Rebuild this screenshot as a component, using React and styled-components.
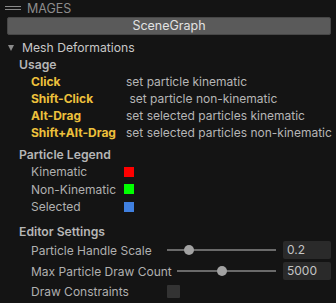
import React from "react";
import styled, { createGlobalStyle } from "styled-components";

const Global = createGlobalStyle`
    html, body {
        margin: 0;
        padding: 0;
        background: #141414;
    }
    body {
        font-family: Inter, "Noto Sans", sans-serif;
        font-size: 12px;
        -webkit-font-smoothing: antialiased;
    }
`

const usage = [
    ["Click", "set particle kinematic"],
    ["Shift-Click", " set particle non-kinematic"],
    ["Alt-Drag", "set selected particles kinematic"],
    ["Shift+Alt-Drag", "set selected particles non-kinematic"],
]

const legend = [
    ["Kinematic", "#ff0000"],
    ["Non-Kinematic", "#00ff00"],
    ["Selected", "#4080e0"],
]

export default function App() {
    return (
        <Panel>
            <Global />
            <Header>
                <Grip><span /><span /></Grip>
                <HeaderTitle>MAGES</HeaderTitle>
            </Header>
            <SceneButton>SceneGraph</SceneButton>
            <TreeNode>
                <Arrow />
                <span>Mesh Deformations</span>
            </TreeNode>
            <Body>
                <SectionTitle>Usage</SectionTitle>
                {usage.map(([k, d]) => (
                    <Row key={k}>
                        <Key>{k}</Key>
                        <Desc>{d}</Desc>
                    </Row>
                ))}

                <SectionTitle $gap={5}>Particle Legend</SectionTitle>
                {legend.map(([name, color]) => (
                    <LegendRow key={name}>
                        <LegendLabel>{name}</LegendLabel>
                        <Swatch $color={color} />
                    </LegendRow>
                ))}

                <SectionTitle $gap={7}>Editor Settings</SectionTitle>
                <SettingRow>
                    <SettingLabel>Particle Handle Scale</SettingLabel>
                    <Slider>
                        <Thumb style={{ left: "20%" }} />
                    </Slider>
                    <NumberBox>0.2</NumberBox>
                </SettingRow>
                <SettingRow>
                    <SettingLabel>Max Particle Draw Count</SettingLabel>
                    <Slider>
                        <Thumb style={{ left: "45.7%" }} />
                    </Slider>
                    <NumberBox>5000</NumberBox>
                </SettingRow>
                <SettingRow $h={19}>
                    <SettingLabel>Draw Constraints</SettingLabel>
                    <Checkbox />
                </SettingRow>
            </Body>
        </Panel>
    )
}

const Panel = styled.div`
    width: 336px;
    height: 303px;
    overflow: hidden;
    background: #141414;
    display: flex;
    flex-direction: column;
`

const Header = styled.div`
    height: 17px;
    display: flex;
    align-items: center;
    padding-left: 5px;
`

const Grip = styled.div`
    width: 16px;
    display: flex;
    flex-direction: column;
    gap: 2px;
    margin-right: 6px;
    margin-top: -1px;

    span {
        height: 1px;
        background: #8a8a8a;
    }
`

const HeaderTitle = styled.div`
    line-height: 17px;
    color: #8c8c8c;
    font-size: 12.5px;
`

const SceneButton = styled.div`
    margin-left: 7px;
    width: 322px;
    height: 16px;
    background: #5a5a5a;
    border: 1px solid #474747;
    border-radius: 2px;
    color: #e2e2e2;
    font-size: 12.5px;
    line-height: 16px;
    text-align: center;
`

const TreeNode = styled.div`
    margin-top: 4px;
    height: 17px;
    display: flex;
    align-items: center;
    padding-left: 8px;
    color: #c8c8c8;
    font-size: 12.2px;
`

const Arrow = styled.div`
    width: 0;
    height: 0;
    border-left: 3.5px solid transparent;
    border-right: 3.5px solid transparent;
    border-top: 6px solid #8a8a8a;
    margin-right: 8px;
`

const Body = styled.div`
    padding-left: 19px;
    display: flex;
    flex-direction: column;
`

const SectionTitle = styled.div`
    height: 17px;
    line-height: 17px;
    margin-top: ${(p) => p.$gap || 0}px;
    color: #b6b6b6;
    font-weight: 600;
    font-size: 12.2px;
`

const Row = styled.div`
    display: flex;
    height: 17px;
    line-height: 17px;
    padding-left: 12px;
`

const Key = styled.div`
    width: 95px;
    color: #edc03c;
    font-weight: 700;
`

const Desc = styled.div`
    color: #b6b6b6;
    white-space: pre;
`

const LegendRow = styled.div`
    display: flex;
    align-items: center;
    height: 17.5px;
    padding-left: 12px;
`

const LegendLabel = styled.div`
    width: 93px;
    color: #b0b0b0;
`

const Swatch = styled.div`
    width: 10px;
    height: 10px;
    background: ${(p) => p.$color};
`

const SettingRow = styled.div`
    display: flex;
    align-items: center;
    height: ${(p) => p.$h || 21}px;
    padding-left: 12px;
    gap: 5px;
`

const SettingLabel = styled.div`
    min-width: 131px;
    color: #b0b0b0;
    white-space: nowrap;
`

const Slider = styled.div`
    position: relative;
    flex: 1;
    height: 2px;
    background: #6a6a6a;
    margin-right: 2px;
`

const Thumb = styled.div`
    position: absolute;
    top: 50%;
    width: 10px;
    height: 10px;
    border-radius: 50%;
    background: #a2a2a2;
    transform: translate(-50%, -50%);
`

const NumberBox = styled.div`
    width: 44px;
    height: 18px;
    margin-right: 5px;
    padding-left: 4px;
    background: #2a2a2a;
    border-radius: 2px;
    color: #c4c4c4;
    line-height: 18px;
`

const Checkbox = styled.div`
    width: 13px;
    height: 13px;
    background: #333333;
    border-radius: 1px;
`
